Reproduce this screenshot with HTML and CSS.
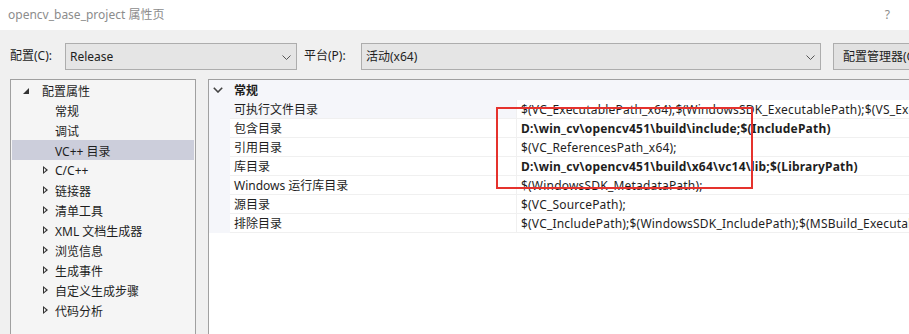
FILE: index.html
```html
<!DOCTYPE html>
<html>
<head>
<meta charset="utf-8">
<link rel="stylesheet" href="styles.css">
</head>
<body>
<div class="window">
  <div class="titlebar">
    <span class="title">opencv_base_project 属性页</span>
    <span class="help">?</span>
  </div>
  <div class="toolbar">
    <span class="label">配置(C):</span>
    <div class="combo combo-config">
      <span>Release</span>
      <svg class="chev" width="9" height="5" viewBox="0 0 9 5"><path d="M0.5 0.5 L4.5 4.5 L8.5 0.5" fill="none" stroke="#555" stroke-width="1"/></svg>
    </div>
    <span class="label label-plat">平台(P):</span>
    <div class="combo combo-plat">
      <span>活动(x64)</span>
      <svg class="chev" width="9" height="5" viewBox="0 0 9 5"><path d="M0.5 0.5 L4.5 4.5 L8.5 0.5" fill="none" stroke="#555" stroke-width="1"/></svg>
    </div>
    <div class="button">配置管理器(O)...</div>
  </div>
  <div class="main">
    <div class="tree">
      <div class="node root"><span class="exp-open"></span><span>配置属性</span></div>
      <div class="node leaf"><span>常规</span></div>
      <div class="node leaf"><span>调试</span></div>
      <div class="node leaf selected"><span>VC++ 目录</span></div>
      <div class="node"><span class="exp-closed"></span><span>C/C++</span></div>
      <div class="node"><span class="exp-closed"></span><span>链接器</span></div>
      <div class="node"><span class="exp-closed"></span><span>清单工具</span></div>
      <div class="node"><span class="exp-closed"></span><span>XML 文档生成器</span></div>
      <div class="node"><span class="exp-closed"></span><span>浏览信息</span></div>
      <div class="node"><span class="exp-closed"></span><span>生成事件</span></div>
      <div class="node"><span class="exp-closed"></span><span>自定义生成步骤</span></div>
      <div class="node"><span class="exp-closed"></span><span>代码分析</span></div>
    </div>
    <div class="grid">
      <div class="cat">
        <svg class="cat-chev" width="10" height="6" viewBox="0 0 10 6"><path d="M0.8 0.8 L5 5 L9.2 0.8" fill="none" stroke="#444" stroke-width="1.6"/></svg>
        <span class="cat-name">常规</span>
      </div>
      <div class="row hover"><div class="gut"></div><div class="name">可执行文件目录</div><div class="val">$(VC_ExecutablePath_x64);$(WindowsSDK_ExecutablePath);$(VS_ExecutablePath);$(MSBuild_ExecutablePath)</div></div>
      <div class="row"><div class="gut"></div><div class="name">包含目录</div><div class="val bold">D:\win_cv\opencv451\build\include;$(IncludePath)</div></div>
      <div class="row"><div class="gut"></div><div class="name">引用目录</div><div class="val">$(VC_ReferencesPath_x64);</div></div>
      <div class="row"><div class="gut"></div><div class="name">库目录</div><div class="val bold">D:\win_cv\opencv451\build\x64\vc14\lib;$(LibraryPath)</div></div>
      <div class="row"><div class="gut"></div><div class="name">Windows 运行库目录</div><div class="val">$(WindowsSDK_MetadataPath);</div></div>
      <div class="row"><div class="gut"></div><div class="name">源目录</div><div class="val">$(VC_SourcePath);</div></div>
      <div class="row"><div class="gut"></div><div class="name">排除目录</div><div class="val">$(VC_IncludePath);$(WindowsSDK_IncludePath);$(MSBuild_ExecutablePath);$(VC_LibraryPath_x64)</div></div>
      <div class="rest"><div class="gut"></div></div>
    </div>
  </div>
  <div class="redbox"></div>
</div>
</body>
</html>
```

FILE: styles.css
```css
* { box-sizing: border-box; }
html, body {
  margin: 0;
  padding: 0;
  width: 909px;
  height: 334px;
  overflow: hidden;
}
body {
  font-family: "Noto Sans", "Noto Sans CJK SC", sans-serif;
  font-size: 12px;
  color: #1e1e1e;
  background: #f0f0f0;
}
.window {
  position: relative;
  width: 909px;
  height: 334px;
  overflow: hidden;
}
.titlebar {
  height: 30px;
  background: #ffffff;
  display: flex;
  align-items: center;
  justify-content: space-between;
  padding: 0 19px 2px 8px;
}
.title {
  color: #8c8c8c;
  font-size: 12px;
}
.help {
  color: #8c8c8c;
  font-size: 12px;
}
.toolbar {
  height: 49px;
  display: flex;
  align-items: flex-start;
  padding: 13px 0 0 10px;
  white-space: nowrap;
}
.label {
  height: 27px;
  line-height: 26px;
  width: 55px;
  flex: none;
}
.label-plat {
  width: 57px;
  margin-left: 7px;
}
.combo {
  height: 27px;
  background: #e5e5e5;
  border: 1px solid #adadad;
  display: flex;
  align-items: center;
  justify-content: space-between;
  padding: 0 5px 0 4px;
  flex: none;
}
.combo span { line-height: 25px; }
.combo-config { width: 232px; }
.combo-plat { width: 460px; }
.chev { flex: none; margin-top: 1px; }
.button {
  margin-left: 12px;
  height: 27px;
  line-height: 25px;
  background: #e1e1e1;
  border: 1px solid #adadad;
  padding: 0 9px;
  flex: none;
}
.main {
  display: flex;
  padding-left: 10px;
  gap: 12px;
  height: 260px;
}
.tree {
  width: 186px;
  flex: none;
  background: #f5f5f5;
  border: 1px solid #a0a0a0;
  border-bottom: none;
  padding: 0 1px;
}
.node {
  height: 20px;
  display: flex;
  align-items: center;
  padding-left: 31px;
  padding-top: 1px;
  white-space: nowrap;
  position: relative;
}
.node.root { padding-left: 11px; }
.node.leaf { padding-left: 43px; }
.node.selected { background: #cccedb; }
.exp-open {
  width: 0; height: 0;
  border-left: 6px solid transparent;
  border-bottom: 6px solid #333;
  margin-right: 13px;
  margin-top: 1px;
}
.exp-closed {
  width: 5px;
  height: 9px;
  margin-right: 7px;
  position: relative;
  flex: none;
}
.exp-closed::before {
  content: "";
  position: absolute;
  left: 0; top: 0;
  border-top: 4.5px solid transparent;
  border-bottom: 4.5px solid transparent;
  border-left: 5px solid #333;
}
.exp-closed::after {
  content: "";
  position: absolute;
  left: 1px; top: 2px;
  border-top: 2.5px solid transparent;
  border-bottom: 2.5px solid transparent;
  border-left: 2.8px solid #f5f5f5;
}
.grid {
  flex: 1;
  background: #ffffff;
  border: 1px solid #a0a0a0;
  border-right: none;
  border-bottom: none;
  display: flex;
  flex-direction: column;
  min-width: 0;
}
.cat {
  height: 20px;
  background: #f5f6fa;
  display: flex;
  align-items: center;
  padding-left: 4px;
}
.cat-chev { margin-right: 11px; }
.cat-name { font-weight: bold; }
.row {
  height: 19px;
  display: flex;
  white-space: nowrap;
}
.gut {
  width: 21px;
  flex: none;
  background: #f5f6fa;
}
.name {
  width: 287px;
  flex: none;
  padding: 2px 0 0 4px;
  line-height: 16px;
  border-bottom: 1px solid #f0f0f0;
  border-right: 1px solid #f0f0f0;
}
.val {
  flex: 1;
  padding: 2px 0 0 4px;
  line-height: 16px;
  letter-spacing: 0.2px;
  border-bottom: 1px solid #f0f0f0;
  overflow: hidden;
}
.hover .name { background: #f5f6fa; }
.bold { font-weight: bold; }
.rest { flex: 1; display: flex; }
.rest .gut { background: #ffffff; }
.redbox {
  position: absolute;
  left: 496px;
  top: 107px;
  width: 257px;
  height: 82px;
  border: 2px solid #e5322d;
}
```
